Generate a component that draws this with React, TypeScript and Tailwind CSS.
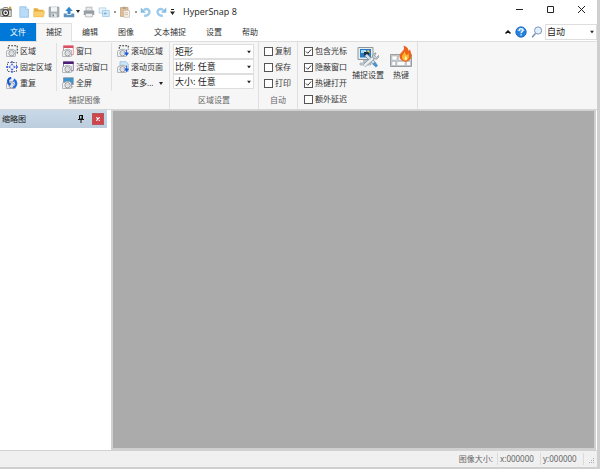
import { useState, type ReactNode } from 'react'

function Svg({ children, className = 'size-3' }: { children: ReactNode; className?: string }) {
  return (
    <svg viewBox="0 0 16 16" fill="none" aria-hidden="true" className={`${className} shrink-0`}>
      {children}
    </svg>
  )
}

// small camera that sits in the lower left of every capture icon
function Cam() {
  return (
    <g>
      <path d="M.5 8.500 2.500 7h1.800l.7-1.200h5l.8 1.200h1.700v7.500c0 .6-.4 1-1 1H1.500c-.6 0-1-.4-1-1z" fill="#eef0f2" stroke="#8a8f94" strokeWidth=".9" />
      <circle cx="7.4" cy="11" r="3.500" fill="#fff" stroke="#73787e" />
      <circle cx="7.4" cy="11" r="1.600" fill="#e6e9ec" stroke="#b0b4b8" strokeWidth=".6" />
    </g>
  )
}

const icons = {
  region: <><path d="M3 5V1h12v12" stroke="#333" strokeWidth="1.4" strokeDasharray="2.4 1.6" /><Cam /></>,
  fixed: (
    <>
      <path d="M2 2h12v12H2z" stroke="#555" strokeWidth="1.3" strokeDasharray="2 1.7" />
      <path d="m8 3.500 2 2.300H6zM8 12.500l-2-2.300h4zM3.500 8l2.300-2v4zM12.500 8l-2.300 2V6z" fill="#2b50e8" />
      <path d="M0 8h3M13 8h3M8 0v3M8 13v3" stroke="#3d5ff0" strokeWidth="1.8" />
    </>
  ),
  repeat: (
    <>
      <Cam />
      <path d="M7 1.2C2.5 1.5 1.8 6.2 4 9.2" stroke="#1457d6" strokeWidth="2.8" />
      <path d="M1.5 8.2h5.6L5 12z" fill="#1457d6" />
      <path d="M9.5 13.8c4.5-.5 5-5.6 2.8-8.6" stroke="#1d6bea" strokeWidth="2.8" />
      <path d="M9 6h5.8L11.2 1.6z" fill="#1d6bea" />
    </>
  ),
  window: <><path d="M2 1h13v12H2z" fill="#fff" stroke="#d66c7c" /><path d="M2 1h13v3H2z" fill="#d94f64" /><Cam /></>,
  active: <><path d="M2 1h13v12H2z" fill="#fff" stroke="#6d4a91" /><path d="M1.5.8h14V4h-14z" fill="#4b1f78" /><Cam /></>,
  full: <><path d="M2 1h13v9H2z" fill="#3b96d2" stroke="#7b8c99" /><path d="M11 10v3h4" stroke="#8a9299" /><Cam /></>,
  scroll: <><path d="M3 5V1h12v5" stroke="#333" strokeWidth="1.4" strokeDasharray="2.4 1.6" /><Cam /><path d="M12.800 6v5M10.300 10.500h5L12.800 14z" stroke="#1758e0" fill="#1758e0" /></>,
  scrollPage: <><path d="M4 1h8l3 3v10H4z" fill="#cfe6f8" stroke="#8fb8da" /><Cam /><path d="M12.800 6v5M10.300 10.500h5L12.800 14z" stroke="#1758e0" fill="#1758e0" /></>,
}

function Caret({ className = '' }: { className?: string }) {
  return (
    <svg viewBox="0 0 4 3" aria-hidden="true" className={`h-[3px] w-1 shrink-0 ${className}`}>
      <path d="M0 0h4L2 3z" fill="#222" />
    </svg>
  )
}

function Command({ icon, label }: { icon: keyof typeof icons; label: string }) {
  return (
    <button className="flex h-4 items-center gap-0.5 whitespace-nowrap">
      <Svg>{icons[icon]}</Svg>
      {label}
    </button>
  )
}

function Combo({ label, options, className = '' }: { label: string; options: string[]; className?: string }) {
  return (
    <div className={`relative border border-[#dedede] bg-white ${className}`}>
      <select aria-label={label} className="block h-full w-full appearance-none pl-px text-[9px] text-[#222] outline-none">
        {options.map(o => <option key={o}>{o}</option>)}
      </select>
      <Caret className="pointer-events-none absolute top-1/2 right-0.5 -translate-y-1/2" />
    </div>
  )
}

function Check({ label, on = false }: { label: string; on?: boolean }) {
  const [checked, setChecked] = useState(on)
  return (
    <label className="flex h-4 items-center gap-0.5 whitespace-nowrap">
      <span className="relative size-[9px]">
        <input
          type="checkbox"
          checked={checked}
          onChange={e => setChecked(e.target.checked)}
          className="block size-[9px] appearance-none border border-[#555] bg-white"
        />
        {checked && (
          <svg viewBox="0 0 10 10" fill="none" aria-hidden="true" className="pointer-events-none absolute inset-0 size-[9px]">
            <path d="m2.2 5 2 2L8 2.8" stroke="#222" />
          </svg>
        )}
      </span>
      {label}
    </label>
  )
}

function Group({ title, children }: { title?: string; children: ReactNode }) {
  return (
    <section className="flex flex-col border-r border-[#e0e0e0] pt-px">
      <div className="flex flex-1 items-start">{children}</div>
      {title && <h2 className="h-4 text-center leading-[14px] text-[#666]">{title}</h2>}
    </section>
  )
}

function TitleBar() {
  return (
    <header className="flex h-[23px] items-center">
      <Svg className="size-3">
        <path d="M1 4h3l1-2h5l1 2h4v10H1z" fill="#e3e1d8" stroke="#666" />
        <path d="M1 4h14v2H1z" fill="#777" />
        <circle cx="7.5" cy="9" r="4" fill="#fff" stroke="#333" strokeWidth="1.6" />
        <circle cx="7.5" cy="9" r="1.6" fill="#333" />
        <path d="M12 1h3v3h-3z" fill="#cf9d36" />
      </Svg>
      <div className="ml-1.5 flex items-center gap-[3px]">
        <button aria-label="新建">
          <Svg><path d="M2.5 1h8L14 4.5V15H2.5z" fill="#b8dcf7" stroke="#8db9dc" /><path d="M10.5 1v3.5H14" fill="#fff" stroke="#8db9dc" /></Svg>
        </button>
        <button aria-label="打开">
          <Svg><path d="M1 3h5l1.5 2H14v9H1z" fill="#e5ac3a" /><path d="M1 7h14.5L14 14.5H1z" fill="#f8cf6c" stroke="#e6b552" strokeWidth=".7" /></Svg>
        </button>
        <button aria-label="保存">
          <Svg><path d="M1.5 1.5h13v13h-13z" fill="#a6afb6" stroke="#8b959d" /><path d="M4 1.5h8v6H4z" fill="#f3f5f6" /><path d="M4.5 10h7v4.5h-7z" fill="#e2e6e9" /><path d="M6 11h2v3H6z" fill="#78838b" /></Svg>
        </button>
        <button aria-label="上传" className="flex items-center gap-px">
          <Svg><path d="m8 1 5 5.5h-3V11H6V6.500H3z" fill="#3488cb" /><path d="M1 10h4v2h6v-2h4v5H1z" fill="#5c91bc" /></Svg>
          <Caret />
        </button>
        <button aria-label="打印">
          <Svg><path d="M4 1.500h8V7H4z" fill="#e6e8ea" stroke="#a6abaf" /><path d="M1 6h14v6H1z" fill="#989da1" /><path d="M3.500 10h9v4.500h-9z" fill="#f1f2f3" stroke="#a6abaf" /></Svg>
        </button>
        <button aria-label="复制" className="flex items-center gap-1">
          <Svg><path d="M1.500 2.500h9v7h-9z" fill="#e8f3fb" stroke="#a9cde7" /><path d="M6 6h9v8H6z" fill="#d5eaf8" stroke="#9bc4e2" /><path d="M8 10h4M10 8l-2 2 2 2" stroke="#6ca7d2" /></Svg>
          <i className="h-0.5 w-0.5 bg-[#999]" />
        </button>
        <button aria-label="粘贴" className="flex items-center gap-1">
          <Svg><path d="M2 2h10v12H2z" fill="#dfbd92" stroke="#c79f70" /><path d="M5 1h4v3H5z" fill="#a9a39c" /><path d="M6.500 6H14v9H6.500z" fill="#f7f4ef" stroke="#c4bbb0" /><path d="M8 9h4M8 11.500h4" stroke="#d5a483" /></Svg>
          <i className="h-0.5 w-0.5 bg-[#999]" />
        </button>
        <button aria-label="撤消">
          <Svg><path d="M5 5.500c4-3 8-1 7.500 3C12 12 9 13 5.500 13" stroke="#9dcaea" strokeWidth="3.200" /><path d="M1 2v7h7z" fill="#83bbe2" /></Svg>
        </button>
        <button aria-label="重做">
          <Svg><path d="M11 5.500c-4-3-8-1-7.500 3C4 12 7 13 10.500 13" stroke="#9dcaea" strokeWidth="3.200" /><path d="M15 2v7H8z" fill="#83bbe2" /></Svg>
        </button>
        <button aria-label="自定义快速访问工具栏">
          <svg viewBox="0 0 5 6" aria-hidden="true" className="h-1.5 w-[5px]"><path d="M1 0h3v1H1zM0 2.500h5L2.500 6z" fill="#222" /></svg>
        </button>
      </div>
      <h1 className="ml-2 font-['Open_Sans',sans-serif] text-[9px] text-[#222]">HyperSnap 8</h1>
      <div className="ml-auto flex self-start">
        {[
          { name: '最小化', d: 'M1 4.500h7' },
          { name: '最大化', d: 'M1.500 1.500h6v6h-6z' },
          { name: '关闭', d: 'm1 1 7 7M8 1 1 8' },
        ].map(b => (
          <button key={b.name} aria-label={b.name} className="flex h-[18px] w-[31px] items-center justify-center">
            <svg viewBox="0 0 9 9" fill="none" aria-hidden="true" className="size-[9px]"><path d={b.d} stroke="#222" /></svg>
          </button>
        ))}
      </div>
    </header>
  )
}

function TabRow() {
  const tabs = ['捕捉', '编辑', '图像', '文本捕捉', '设置', '帮助']
  const [current, setCurrent] = useState('捕捉')
  return (
    <nav className="flex h-[18px] items-stretch">
      <button className="bg-[#0078d7] px-2.5 text-white">文件</button>
      {tabs.map(t => (
        <button
          key={t}
          onClick={() => setCurrent(t)}
          className={t === current ? 'relative z-10 -mb-px border border-b-0 border-[#e2e2e2] bg-[#f6f6f6] px-[9px] pb-0.5' : 'px-2.5'}
        >
          {t}
        </button>
      ))}
      <div className="ml-auto flex items-center gap-1">
        <button aria-label="折叠功能区">
          <svg viewBox="0 0 6 4" fill="none" aria-hidden="true" className="h-1 w-1.5"><path d="m.5 3.500 2.500-2.500 2.500 2.500" stroke="#111" strokeWidth="1.500" /></svg>
        </button>
        <button aria-label="帮助主题">
          <Svg>
            <circle cx="8" cy="8" r="7" fill="#2480df" stroke="#1760b5" />
            <path d="M2.500 6a6 5 0 0 1 11 0c-3 2-8 2-11 0" fill="#6db4f4" />
            <path d="M5.600 6.200c0-3.400 5-3.300 5-.4 0 2-2.500 1.800-2.500 4M8.100 11v1.800" stroke="#fff" strokeWidth="1.700" />
          </Svg>
        </button>
        <button aria-label="缩放">
          <Svg><circle cx="9.500" cy="6" r="4.800" fill="#e2effc" stroke="#7893bd" strokeWidth="1.300" /><path d="m6 10-4.500 5" stroke="#7b8cab" strokeWidth="2" /></Svg>
        </button>
        <Combo label="缩放比例" options={['自动', '100%']} className="-ml-0.5 h-4 w-[52px]" />
      </div>
    </nav>
  )
}

function CaptureSettingsIcon() {
  return (
    <svg viewBox="0 0 24 24" fill="none" aria-hidden="true" className="size-6">
      <path d="M2 2.500h15v12H2z" fill="#e9edf0" stroke="#8d979e" />
      <path d="M4 4h11v8.500H4z" fill="#2779c2" />
      <path d="M5 5h5v3H5z" fill="#a2dbf7" />
      <path d="M8 7h5v3.500H8z" fill="#1d2f41" />
      <path d="m10 6 3-1 1 3z" fill="#edc744" />
      <path d="M7 15h5v3H7z" fill="#b9c0c5" />
      <path d="M4 18h11v2H4z" fill="#cbd1d5" stroke="#959da3" strokeWidth=".6" />
      <path d="m10 10 9.500 9.500" stroke="#718898" strokeWidth="3.400" />
      <path d="m10 10 9.500 9.500" stroke="#dfe7ec" strokeWidth="2.200" />
      <path d="m8 21 10-9" stroke="#7d8992" strokeWidth="3.600" />
      <path d="m8 21 10-9" stroke="#edf0f2" strokeWidth="2.400" />
      <path d="M17 13c-1-3 .500-5 3-5l-1.500 3 2 1.500 2-2c.600 3-2 5-5.500 2.500" fill="#d3dbe0" stroke="#7d8992" strokeWidth=".8" />
      <path d="M17.500 18 21 21.500" stroke="#4a91ce" strokeWidth="3" />
    </svg>
  )
}

function HotkeyIcon() {
  return (
    <svg viewBox="0 0 24 24" fill="none" aria-hidden="true" className="size-6">
      <path d="M1.500 9.500h21v12h-21z" fill="#c9cccf" stroke="#999ea2" />
      <path d="M3 11h5v4H3zM9.500 11h4v4h-4zM3 16.500h3.500v4H3zM8 16.500h8v4H8zM17.500 16.500h4v4h-4z" fill="#fff" stroke="#a5a9ad" strokeWidth=".5" />
      <path d="M13 15.500c-4-3-2.500-6.500.300-9C15.500 4.500 15.200 3 14.500.500c3.500 1 5 3 5 5.500L21 4.500c1 3.500 3 8-1 11-2 1.500-5 1.500-7 0" fill="#ed611b" />
      <path d="M14.300 15c-2.500-2.500-1-5 1.500-8.500.600 2 1 3.500 2.500 3.500l1-2c1 3 1 5.500-1.200 7-1.200.7-2.800.7-3.800 0" fill="#fbb52f" />
      <path d="M16 15c-1.200-1.500 0-3 .8-4.500.8 1.500 2 3 .8 4.500z" fill="#fff2a4" />
    </svg>
  )
}

function Ribbon() {
  return (
    <div className="flex h-[68px] border-t border-[#dedede] bg-[#f6f6f6]">
      <Group title="捕捉图像">
        <div className="flex w-[56px] flex-col pl-1.5">
          <Command icon="region" label="区域" />
          <Command icon="fixed" label="固定区域" />
          <Command icon="repeat" label="重复" />
        </div>
        <div className="flex w-[55px] flex-col border-l border-[#e0e0e0] pl-[5px]">
          <Command icon="window" label="窗口" />
          <Command icon="active" label="活动窗口" />
          <Command icon="full" label="全屏" />
        </div>
        <div className="flex w-[58px] flex-col border-l border-[#e0e0e0] pl-[5px]">
          <Command icon="scroll" label="滚动区域" />
          <Command icon="scrollPage" label="滚动页面" />
          <button className="flex h-4 items-center justify-between pr-1.5 pl-3.5">更多... <Caret /></button>
        </div>
      </Group>
      <Group title="区域设置">
        <div className="flex w-[88px] flex-col pt-px pr-1 pl-[3px]">
          <Combo label="形状" options={['矩形', '椭圆']} className="h-[15px]" />
          <Combo label="比例" options={['比例: 任意']} className="h-[15px]" />
          <Combo label="大小" options={['大小: 任意']} className="h-[15px]" />
        </div>
      </Group>
      <Group title="自动">
        <div className="flex flex-col pr-1.5 pl-[5px]">
          <Check label="复制" />
          <Check label="保存" />
          <Check label="打印" />
        </div>
      </Group>
      <Group>
        <div className="flex flex-col pl-1.5">
          <Check label="包含光标" on />
          <Check label="隐蔽窗口" on />
          <Check label="热键打开" on />
          <Check label="额外延迟" />
        </div>
        <button className="ml-[5px] flex flex-col items-center pt-0.5"><CaptureSettingsIcon />捕捉设置</button>
        <button className="mr-1 ml-[5px] flex flex-col items-center pt-0.5"><HotkeyIcon />热键</button>
      </Group>
    </div>
  )
}

export default function App() {
  return (
    <div className="min-h-screen bg-[#cfcfcf] pr-[3px] pb-0.5 font-['Noto_Sans','Noto_Sans_CJK_SC',sans-serif] text-[8px] leading-3 text-[#333]">
      <div className="flex min-h-[calc(100vh-2px)] flex-col bg-white">
        <TitleBar />
        <TabRow />
        <Ribbon />
        <div className="flex flex-1 border-t border-[#d5d6d7]">
          <aside className="w-[111px] bg-white pr-1">
            <div className="flex h-[18px] items-center bg-linear-to-b from-[#c9d9e8] to-[#bccddd] pr-[3px] pl-0.5">
              <h2 className="text-[#111]">缩略图</h2>
              <button aria-label="固定" className="mr-2 ml-auto">
                <svg viewBox="0 0 6 8" fill="none" aria-hidden="true" className="h-2 w-1.5"><path d="M1.500 .5h3V4h-3zM0 4.500h6M3 5v3" stroke="#111" /><path d="M3.500 0H5v4H3.500z" fill="#111" /></svg>
              </button>
              <button aria-label="关闭面板" className="flex h-3 w-3 items-center justify-center border border-[#b5575d] bg-[#d0444b]">
                <svg viewBox="0 0 4 4" aria-hidden="true" className="size-1"><path d="m.3.3 3.400 3.400m0-3.400-3.400 3.400" stroke="#fff" strokeWidth="1.200" /></svg>
              </button>
            </div>
          </aside>
          <main className="mr-px flex-1 border-2 border-t border-[#d0d0d0] bg-[#ababab]" />
        </div>
        <footer className="flex h-[17px] items-center justify-end border-t border-[#d2d2d2] bg-[#f0f0f0] text-[#666]">
          <span className="pr-1">图像大小:</span>
          <span className="w-[43px] border-l border-[#dadada] pl-0.5">x:000000</span>
          <span className="w-[43px] border-l border-[#dadada] pl-0.5">y:000000</span>
          <span className="flex h-3 w-3.5 items-end justify-end border-l border-[#dadada] pr-0.5">
            <svg viewBox="0 0 7 7" aria-hidden="true" className="size-[7px]"><path d="M5 0h1v1H5zM3 2h1v1H3zM5 2h1v1H5zM1 4h1v1H1zM3 4h1v1H3zM5 4h1v1H5z" fill="#aaa" /></svg>
          </span>
        </footer>
      </div>
    </div>
  )
}
